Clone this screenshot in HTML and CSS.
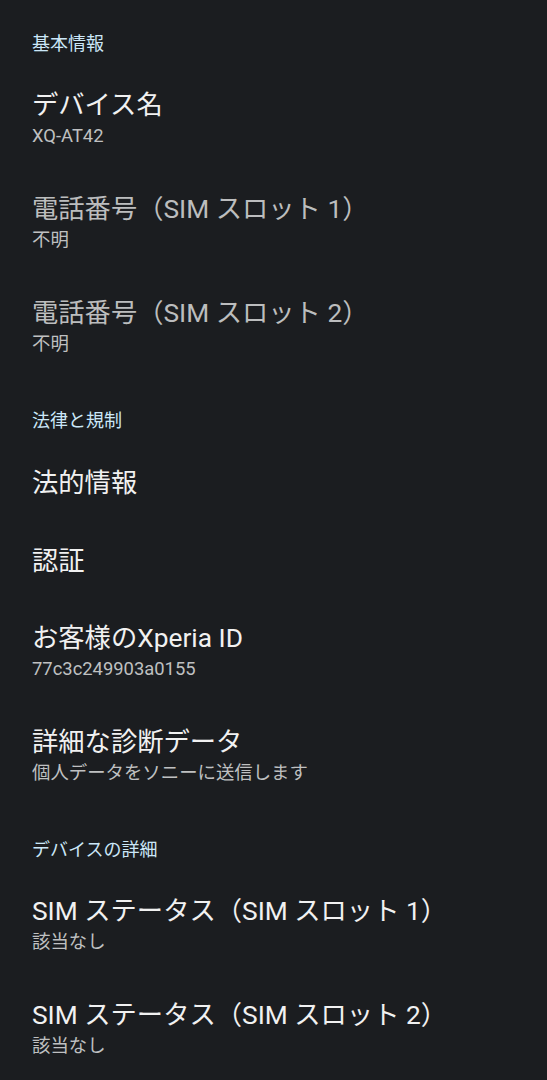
FILE: index.html
```html
<!DOCTYPE html>
<html lang="ja">
<head>
    <meta charset="UTF-8">
    <meta name="viewport" content="width=device-width, initial-scale=1.0">
    <title>端末情報</title>
    <link rel="stylesheet" href="styles.css">
</head>
<body>
    <div class="list">
        <div class="category">基本情報</div>
        <div class="pref">
            <div class="title">デバイス名</div>
            <div class="summary">XQ-AT42</div>
        </div>
        <div class="pref disabled">
            <div class="title">電話番号（SIM スロット 1）</div>
            <div class="summary">不明</div>
        </div>
        <div class="pref disabled">
            <div class="title">電話番号（SIM スロット 2）</div>
            <div class="summary">不明</div>
        </div>

        <div class="category">法律と規制</div>
        <div class="pref single">
            <div class="title">法的情報</div>
        </div>
        <div class="pref single">
            <div class="title">認証</div>
        </div>
        <div class="pref">
            <div class="title">お客様のXperia ID</div>
            <div class="summary">77c3c249903a0155</div>
        </div>
        <div class="pref">
            <div class="title">詳細な診断データ</div>
            <div class="summary">個人データをソニーに送信します</div>
        </div>

        <div class="category">デバイスの詳細</div>
        <div class="pref">
            <div class="title">SIM ステータス（SIM スロット 1）</div>
            <div class="summary">該当なし</div>
        </div>
        <div class="pref">
            <div class="title">SIM ステータス（SIM スロット 2）</div>
            <div class="summary">該当なし</div>
        </div>
    </div>
</body>
</html>
```

FILE: styles.css
```css
html, body {
    margin: 0;
    padding: 0;
    background-color: #1b1d20;
}
body {
    font-family: Roboto, "Noto Sans CJK JP", sans-serif;
    color: #f1f1f1;
    height: 1080px;
    overflow: hidden;
}
.list {
    display: flex;
    flex-direction: column;
    padding-top: 2px;
}
.category {
    padding: 30px 32px 11px;
    font-size: 18px;
    line-height: 24px;
    color: #cbe7f8;
}
.pref {
    display: flex;
    flex-direction: column;
    padding: 21px 32px;
}
.pref.single {
    padding: 22px 32px;
}
.title {
    font-size: 26.3px;
    line-height: 34px;
    color: #f1f1f1;
}
.summary {
    font-size: 18.4px;
    line-height: 28px;
    color: #bfc0c1;
}
.disabled .title {
    color: #bcbdbe;
}
```
